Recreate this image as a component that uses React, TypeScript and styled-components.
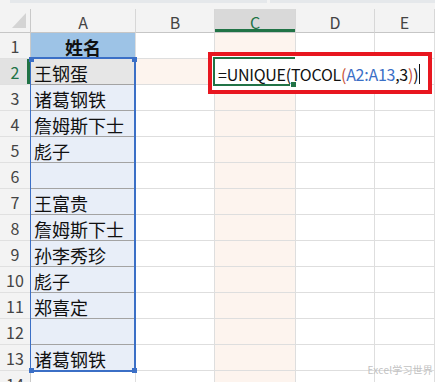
import React from 'react'
import styled, { createGlobalStyle, css } from 'styled-components'

const GlobalStyle = createGlobalStyle`
  html, body { margin: 0; padding: 0; background: #fff; }
  body { font-family: "Noto Sans CJK SC", "Liberation Sans", sans-serif; }
`

const GRID = '#dedede'
const GREEN = '#217346'
const BLUE = '#3b6fc6'

const Page = styled.div`
  position: relative;
  width: 435px;
  height: 382px;
  overflow: hidden;
  background: #fff;
`

const TopStrip = styled.div`
  height: 9px;
  background: #f3f3f3;
  display: flex;
  gap: 3px;
  padding-left: 10px;
  box-sizing: border-box;
`

const StripBar = styled.div<{ $w?: number }>`
  height: 3px;
  background: #e5e8eb;
  ${(p) => (p.$w ? `width: ${p.$w}px;` : 'flex: 1;')}
`

const Sheet = styled.div`
  display: grid;
  grid-template-columns: 31px 105px 79px 81px 79px 1fr;
  grid-template-rows: 24px repeat(14, 26px);
`

const Corner = styled.div`
  background: #f3f3f3;
  border-right: 1px solid #c9c9c9;
  border-bottom: 1px solid #c6c6c6;
  box-sizing: border-box;
  position: relative;

  &::after {
    content: '';
    position: absolute;
    left: 12px;
    top: 4px;
    width: 14px;
    height: 15px;
    background: #d4d4d4;
    clip-path: polygon(100% 0, 100% 100%, 0 100%);
  }
`

const ColHeader = styled.div<{ $active?: boolean }>`
  box-sizing: border-box;
  display: flex;
  align-items: center;
  justify-content: center;
  padding-top: 2px;
  font-size: 16px;
  color: #444;
  background: #f3f3f3;
  border-right: 1px solid #d7d7d7;
  border-bottom: 1px solid #c6c6c6;
  ${(p) =>
    p.$active &&
    css`
      background: #d9d9d9;
      color: ${GREEN};
      box-shadow: inset 0 -3px 0 ${GREEN};
    `}
`

const RowHeader = styled.div<{ $active?: boolean }>`
  box-sizing: border-box;
  display: flex;
  align-items: center;
  justify-content: center;
  padding-top: 1px;
  font-size: 16px;
  color: #444;
  background: #f3f3f3;
  border-right: 1px solid #c9c9c9;
  border-bottom: 1px solid #e0e0e0;
  ${(p) =>
    p.$active &&
    css`
      background: #e2e2e2;
      color: ${GREEN};
      box-shadow: inset -3px 0 0 ${GREEN};
    `}
`

type Tone = 'plain' | 'peach' | 'data' | 'current' | 'head'

const toneBg: Record<Tone, string> = {
  plain: '#fff',
  peach: '#fdf4ee',
  data: '#e8eef8',
  current: '#e6e6e6',
  head: '#9dc3e6',
}

const Cell = styled.div<{ $tone?: Tone }>`
  box-sizing: border-box;
  display: flex;
  align-items: center;
  padding: 2px 0 0 3px;
  font-size: 18px;
  color: #111;
  white-space: nowrap;
  overflow: hidden;
  background: ${(p) => toneBg[p.$tone || 'plain']};
  border-right: 1px solid ${GRID};
  border-bottom: 1px solid
    ${(p) => (p.$tone === 'data' || p.$tone === 'current' || p.$tone === 'head' ? '#a3a3a3' : GRID)};
  ${(p) =>
    p.$tone === 'head' &&
    css`
      justify-content: center;
      padding-left: 0;
      font-weight: bold;
    `}
`

const RangeBox = styled.div`
  position: absolute;
  left: 30px;
  top: 57px;
  width: 106px;
  height: 315px;
  box-sizing: border-box;
  border: 2px solid ${BLUE};
  border-left-width: 1px;
  pointer-events: none;
`

const Handle = styled.span<{ $x: 'left' | 'right'; $y: 'top' | 'bottom' }>`
  position: absolute;
  width: 5px;
  height: 5px;
  background: ${BLUE};
  ${(p) => (p.$x === 'left' ? 'left: -2px;' : 'right: -3px;')}
  ${(p) => (p.$y === 'top' ? 'top: -2px;' : 'bottom: -3px;')}
`

const FormulaBox = styled.div`
  position: absolute;
  left: 208px;
  top: 52px;
  width: 224px;
  height: 42px;
  box-sizing: border-box;
  border: 4px solid #e8161f;
  background: #fff;
  display: flex;
  align-items: center;
  padding: 1px 0 0 6px;
`

const ActiveCell = styled.div`
  position: absolute;
  left: 1px;
  top: 1px;
  width: 82px;
  height: 29px;
  box-sizing: border-box;
  border: 2px solid ${GREEN};
  border-right: none;

  &::after {
    content: '';
    position: absolute;
    right: -2px;
    bottom: -4px;
    width: 5px;
    height: 5px;
    background: ${GREEN};
    border: 1px solid #fff;
  }
`

const Formula = styled.div`
  position: relative;
  font-size: 16px;
  letter-spacing: -0.25px;
  color: #111;
  white-space: nowrap;
  display: flex;
  align-items: center;
`

const Tok = styled.span<{ $c?: string }>`
  color: ${(p) => p.$c || '#111'};
`

const Caret = styled.span`
  display: inline-block;
  width: 1px;
  height: 20px;
  background: #111;
  margin-left: 1px;
`

const Watermark = styled.div`
  position: absolute;
  right: 2px;
  bottom: 5px;
  font-size: 10px;
  color: #c2c2c2;
  letter-spacing: 0.2px;
`

const names: string[] = [
  '姓名',
  '王钢蛋',
  '诸葛钢铁',
  '詹姆斯下士',
  '彪子',
  '',
  '王富贵',
  '詹姆斯下士',
  '孙李秀珍',
  '彪子',
  '郑喜定',
  '',
  '诸葛钢铁',
  '',
]

function toneForA(row: number): Tone {
  if (row === 1) return 'head'
  if (row === 2) return 'current'
  if (row <= 13) return 'data'
  return 'plain'
}

export default function App() {
  return (
    <Page>
      <GlobalStyle />
      <TopStrip>
        <StripBar $w={257} />
        <StripBar />
      </TopStrip>
      <Sheet>
        <Corner />
        {['A', 'B', 'C', 'D', 'E'].map((c) => (
          <ColHeader key={c} $active={c === 'C'}>
            {c}
          </ColHeader>
        ))}
        {names.map((name, i) => {
          const row = i + 1
          return (
            <React.Fragment key={row}>
              <RowHeader $active={row === 2}>{row}</RowHeader>
              <Cell $tone={toneForA(row)}>{name}</Cell>
              <Cell $tone={row === 2 ? 'peach' : 'plain'} />
              <Cell $tone="peach" />
              <Cell />
              <Cell />
            </React.Fragment>
          )
        })}
      </Sheet>

      <RangeBox>
        <Handle $x="left" $y="top" />
        <Handle $x="right" $y="top" />
        <Handle $x="left" $y="bottom" />
        <Handle $x="right" $y="bottom" />
      </RangeBox>

      <FormulaBox>
        <ActiveCell />
        <Formula>
          <Tok>=UNIQUE(TOCOL</Tok>
          <Tok $c="#c9523a">(</Tok>
          <Tok $c={BLUE}>A2:A13</Tok>
          <Tok>,3</Tok>
          <Tok $c="#c9523a">)</Tok>
          <Tok>)</Tok>
          <Caret />
        </Formula>
      </FormulaBox>

      <Watermark>Excel学习世界</Watermark>
    </Page>
  )
}
